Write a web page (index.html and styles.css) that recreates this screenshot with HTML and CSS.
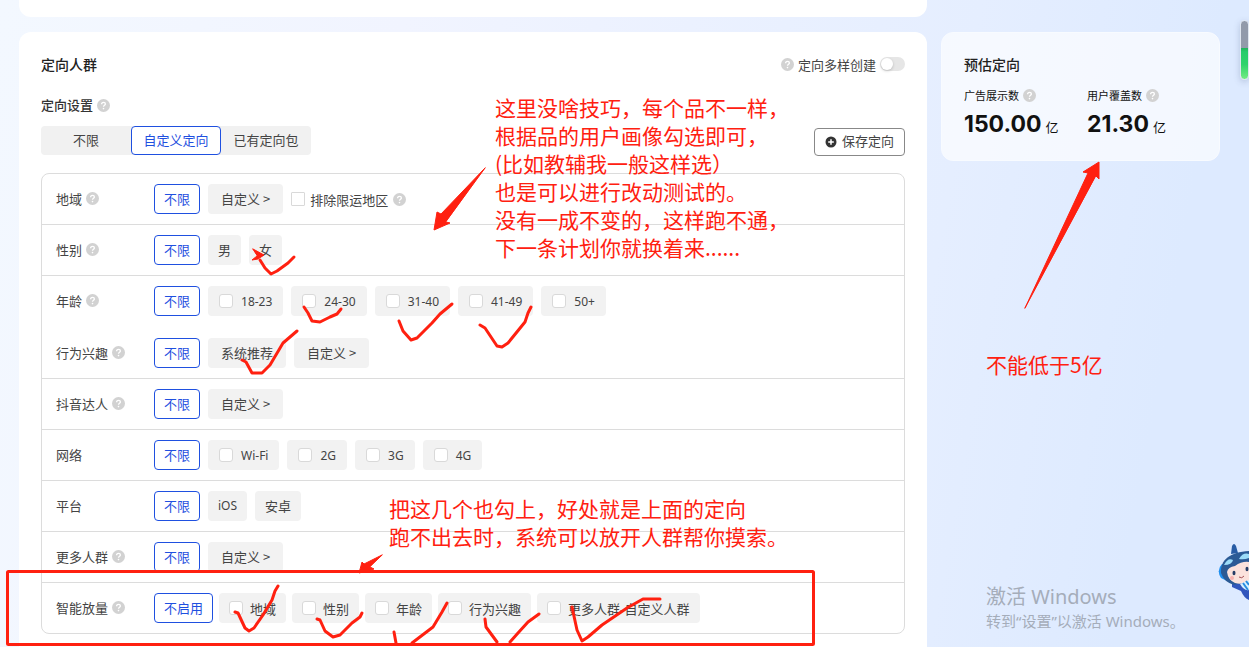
FILE: index.html
```html
<!DOCTYPE html>
<html lang="zh-CN">
<head>
  <meta charset="UTF-8" />
  <meta name="viewport" content="width=device-width, initial-scale=1" />
  <title>定向人群</title>
  <link rel="stylesheet" href="styles.css">
</head>

<body>

<svg class="defs" aria-hidden="true">
  <symbol id="help" viewBox="0 0 13 13">
    <circle cx="6.5" cy="6.5" r="6.5" fill="#d2d2d2" />
    <path d="M4.6 5.2c0-1.2.8-1.9 1.9-1.9s1.9.7 1.9 1.7c0 1.3-1.9 1.3-1.9 2.7" fill="none" stroke="#fff" stroke-width="1.3" />
    <circle cx="6.5" cy="9.6" r=".8" fill="#fff" />
  </symbol>
</svg>

<div class="page">
  <main class="main-column">
    <section class="card previous-card"></section>

    <section class="card audience-card">
      <div class="card-head">
        <h2>定向人群</h2>
        <label class="multi-create">
          <svg class="help"><use href="#help" /></svg>
          <span>定向多样创建</span>
          <input type="checkbox" class="switch" />
        </label>
      </div>

      <h3>定向设置 <svg class="help"><use href="#help" /></svg></h3>

      <div class="toolbar">
        <div class="segmented">
          <button type="button">不限</button>
          <button type="button" class="active">自定义定向</button>
          <button type="button">已有定向包</button>
        </div>
        <button type="button" class="save-btn">
          <svg viewBox="0 0 12 12" width="12" height="12"><circle cx="6" cy="6" r="5.5" fill="#333" /><path d="M6 3.2v5.6M3.2 6h5.6" stroke="#fff" stroke-width="1.5" /></svg>
          <span>保存定向</span>
        </button>
      </div>

      <div class="settings">
        <div class="row">
          <div class="line">
            <span class="name">地域 <svg class="help"><use href="#help" /></svg></span>
            <div class="chips">
              <button type="button" class="chip active">不限</button>
              <button type="button" class="chip">自定义 &gt;</button>
              <label class="plain-check"><input type="checkbox" />排除限运地区 <svg class="help"><use href="#help" /></svg></label>
            </div>
          </div>
        </div>

        <div class="row">
          <div class="line">
            <span class="name">性别 <svg class="help"><use href="#help" /></svg></span>
            <div class="chips">
              <button type="button" class="chip active">不限</button>
              <button type="button" class="chip short">男</button>
              <button type="button" class="chip short">女</button>
            </div>
          </div>
        </div>

        <div class="row double">
          <div class="line">
            <span class="name">年龄 <svg class="help"><use href="#help" /></svg></span>
            <div class="chips">
              <button type="button" class="chip active">不限</button>
              <label class="chip check latin"><input type="checkbox" />18-23</label>
              <label class="chip check latin"><input type="checkbox" />24-30</label>
              <label class="chip check latin"><input type="checkbox" />31-40</label>
              <label class="chip check latin"><input type="checkbox" />41-49</label>
              <label class="chip check latin"><input type="checkbox" />50+</label>
            </div>
          </div>
          <div class="line">
            <span class="name">行为兴趣 <svg class="help"><use href="#help" /></svg></span>
            <div class="chips">
              <button type="button" class="chip active">不限</button>
              <button type="button" class="chip">系统推荐</button>
              <button type="button" class="chip">自定义 &gt;</button>
            </div>
          </div>
        </div>

        <div class="row">
          <div class="line">
            <span class="name">抖音达人 <svg class="help"><use href="#help" /></svg></span>
            <div class="chips">
              <button type="button" class="chip active">不限</button>
              <button type="button" class="chip">自定义 &gt;</button>
            </div>
          </div>
        </div>

        <div class="row">
          <div class="line">
            <span class="name">网络</span>
            <div class="chips">
              <button type="button" class="chip active">不限</button>
              <label class="chip check latin"><input type="checkbox" />Wi-Fi</label>
              <label class="chip check latin"><input type="checkbox" />2G</label>
              <label class="chip check latin"><input type="checkbox" />3G</label>
              <label class="chip check latin"><input type="checkbox" />4G</label>
            </div>
          </div>
        </div>

        <div class="row">
          <div class="line">
            <span class="name">平台</span>
            <div class="chips">
              <button type="button" class="chip active">不限</button>
              <button type="button" class="chip short latin">iOS</button>
              <button type="button" class="chip short">安卓</button>
            </div>
          </div>
        </div>

        <div class="row">
          <div class="line">
            <span class="name">更多人群 <svg class="help"><use href="#help" /></svg></span>
            <div class="chips">
              <button type="button" class="chip active">不限</button>
              <button type="button" class="chip">自定义 &gt;</button>
            </div>
          </div>
        </div>

        <div class="row">
          <div class="line">
            <span class="name">智能放量 <svg class="help"><use href="#help" /></svg></span>
            <div class="chips tight">
              <button type="button" class="chip active">不启用</button>
              <label class="chip check"><input type="checkbox" />地域</label>
              <label class="chip check"><input type="checkbox" />性别</label>
              <label class="chip check"><input type="checkbox" />年龄</label>
              <label class="chip check"><input type="checkbox" />行为兴趣</label>
              <label class="chip check"><input type="checkbox" />更多人群-自定义人群</label>
            </div>
          </div>
        </div>
      </div>
    </section>
  </main>

  <aside class="estimate">
    <h2>预估定向</h2>
    <div class="stats">
      <div class="stat">
        <div class="stat-name">广告展示数 <svg class="help"><use href="#help" /></svg></div>
        <div class="stat-value"><strong>150.00</strong>亿</div>
      </div>
      <div class="stat">
        <div class="stat-name">用户覆盖数 <svg class="help"><use href="#help" /></svg></div>
        <div class="stat-value"><strong>21.30</strong>亿</div>
      </div>
    </div>
  </aside>
</div>

<div class="meter"></div>

<svg class="mascot" viewBox="0 0 31 58" width="31" height="58" aria-hidden="true">
  <path d="M13 11 14 3q2-4 4 0l2 7z" fill="#285ca5" />
  <path d="M4 21q-6 6-1 14l6 3V21z" fill="#1d8fef" />
  <path d="M14 39l17 2v16q-5-2-8-9l-9-4z" fill="#3156bd" />
  <path d="M3 30C2 17 12 9 31 8v30l-15 4Q6 39 3 30z" fill="#2b5a95" />
  <path d="M6 22q4-8 9-5-1 5-9 5zM21 16q4-7 10-5v4q-5 2-10 1z" fill="#9cdcf8" />
  <path d="M9 29q1-5 8-6 7-5 14-4v19q-7 4-14 2-7-3-8-11z" fill="#fbe2dc" />
  <circle cx="14" cy="35" r="2" fill="#f7b1ae" />
  <ellipse cx="16" cy="30" rx="1.5" ry="2.3" fill="#253d66" />
  <ellipse cx="29" cy="26" rx="1.5" ry="2.3" fill="#253d66" />
  <path d="M21 34q3 2 5-1" fill="none" stroke="#a55358" />
  <path d="M22 41l9-4v10q-5 1-9-6z" fill="#d8f2ff" />
  <path d="M25 40l5 7M28 38l3 4" stroke="#2a8de0" stroke-width="2" />
</svg>

<div class="watermark">
  <p class="watermark-title">激活 Windows</p>
  <p>转到“设置”以激活 Windows。</p>
</div>

<!-- hand-drawn review marks -->
<svg class="marks" viewBox="0 0 1249 647" width="1249" height="647" aria-hidden="true">
  <rect x="7.5" y="571.5" width="806" height="73" rx="1" />
  <path d="M260 260L265 268L271 274L277 271L288 263L294 257" />
  <path d="M304 307L308 313L312 321L320 322L330 317L337 314L341 309" />
  <path d="M399 321L403 331L411 340L417 338L432 323L440 314L452 304" />
  <path d="M480 325L485 328L497 346L502 347L508 343L525 322L528 313L531 307" />
  <path d="M242 360L246 362L252 373L262 373L270 365L283 343L297 331" />
  <path d="M235 612L238 613L245 628L249 631L254 628L263 615L272 600L275 591L278 586" />
  <path d="M317 619L320 620L325 631L333 637L340 635L352 623L360 617L362 613" />
  <path d="M394 632L396 643M412 643L433 627L442 612L447 603" />
  <path d="M485 619L486 627L497 642M510 642L518 633L528 622L539 614" />
  <path d="M572 607L577 630L582 641L588 637L602 625L627 608L643 599L660 599" />
  <g class="solid">
    <path d="M253 249L264 255L258 259L252 260L257 256z" />
    <path d="M485 168L441 214L437 212L434 230L450 223L446 222z" />
    <path d="M1025 308L1088 173L1083 172L1099 162L1099 179L1096 176z" />
    <path d="M382 555L364 564L362 562L359 573L374 569L370 567z" />
  </g>
</svg>
<p class="note note-pick">这里没啥技巧，每个品不一样，<br>根据品的用户画像勾选即可，<br>(比如教辅我一般这样选）<br>也是可以进行改动测试的。<br>没有一成不变的，这样跑不通，<br>下一条计划你就换着来......</p>
<p class="note note-expand">把这几个也勾上，好处就是上面的定向<br>跑不出去时，系统可以放开人群帮你摸索。</p>
<p class="note note-limit">不能低于5亿</p>

</body>
</html>
```

FILE: styles.css
```css
* {
  box-sizing: border-box;
}

body {
  margin: 0;
  font-family: "Noto Sans CJK SC", sans-serif;
  font-size: 13px;
  color: #444;
  background: linear-gradient(100deg, #f3f8ff 0%, #f1f4ff 30%, #e5eeff 72%, #ddeaff 90%);
  overflow: hidden;
}

h2, h3, p {
  margin: 0;
}

button, input {
  font: inherit;
  color: inherit;
  margin: 0;
}

button, label {
  cursor: pointer;
}

.defs {
  display: none;
}

.page {
  display: flex;
  gap: 14px;
  min-height: 100vh;
  padding: 0 29px 0 19px;
}

.main-column {
  flex: 1;
  display: flex;
  flex-direction: column;
  gap: 15px;
}

.card {
  background: #fff;
}

.previous-card {
  height: 17px;
  border-radius: 0 0 12px 12px;
}

.audience-card {
  flex: 1;
  padding: 21px 22px 12px;
  border-radius: 12px 12px 0 0;
}

h2 {
  font-size: 14px;
  line-height: 22px;
  font-weight: 500;
  color: #222;
}

h3 {
  display: flex;
  align-items: center;
  gap: 4px;
  margin-top: 20px;
  font-size: 13px;
  line-height: 20px;
  font-weight: 500;
  color: #333;
}

.help {
  width: 13px;
  height: 13px;
  flex: none;
}

.card-head, .toolbar {
  display: flex;
  align-items: center;
  justify-content: space-between;
}

.multi-create {
  display: flex;
  align-items: center;
  gap: 4px;
}

.switch {
  appearance: none;
  width: 25px;
  height: 14px;
  border-radius: 7px;
  background: #e6e6e6;
}

.switch::before {
  content: "";
  display: block;
  width: 12px;
  height: 12px;
  margin: 1px;
  border-radius: 50%;
  background: #fff;
  box-shadow: 0 1px 3px rgba(0, 0, 0, 0.2);
}

.toolbar {
  margin-top: 10px;
}

.segmented {
  display: flex;
  background: #f1f1f1;
  border-radius: 4px;
}

.segmented button {
  width: 90px;
  height: 29px;
  padding: 0 0 3px;
  border: 1px solid transparent;
  border-radius: 4px;
  background: none;
}

.segmented .active {
  background: #fff;
  border-color: #1f50e0;
  color: #1f50e0;
}

.save-btn {
  display: flex;
  align-items: center;
  justify-content: center;
  gap: 5px;
  width: 91px;
  height: 28px;
  padding: 0;
  margin-top: 3px;
  border: 1px solid #888;
  border-radius: 4px;
  background: #fff;
}

.save-btn span {
  padding-bottom: 3px;
}

.settings {
  margin-top: 17px;
  border: 1px solid #dcdcdc;
  border-radius: 8px;
}

.row {
  padding: 10px 14px;
  border-bottom: 1px solid #dcdcdc;
}

.row:last-child {
  border-bottom: none;
}

.double {
  display: grid;
  gap: 22px;
}

.line {
  display: flex;
  align-items: center;
}

.name {
  display: flex;
  align-items: center;
  gap: 4px;
  width: 98px;
  padding-bottom: 1px;
}

.chips {
  display: flex;
  align-items: center;
  gap: 8px;
}

.tight {
  gap: 6px;
}

.chip {
  display: flex;
  align-items: center;
  height: 30px;
  padding: 0 12px 2px;
  border: 1px solid transparent;
  border-radius: 4px;
  background: #f2f2f2;
}

.chip.active {
  padding: 0 9px 2px;
  background: #fff;
  border-color: #1f50e0;
  color: #1f50e0;
}

.chip.short {
  padding: 0 9px 2px;
}

.chip.check {
  gap: 8px;
  padding: 0 10px;
}

.tight .chip.check {
  gap: 7px;
  padding: 0 9px;
}

.latin {
  font-family: "Noto Sans", sans-serif;
  font-size: 12px;
}

.plain-check {
  display: flex;
  align-items: center;
  gap: 5px;
}

.check input, .plain-check input {
  appearance: none;
  width: 14px;
  height: 14px;
  border: 1px solid #d9d9d9;
  border-radius: 3px;
  background: #fff;
}

.plain-check input {
  border-radius: 1px;
}

/* right side */
.estimate {
  width: 279px;
  height: 129px;
  margin-top: 32px;
  padding: 20px 22px;
  border: 1px solid #f8fbff;
  border-radius: 12px;
  background: rgba(255, 255, 255, 0.65);
}

.stats {
  display: grid;
  grid-template-columns: 123px 1fr;
  margin-top: 12px;
  color: #111;
}

.stat-name {
  display: flex;
  align-items: center;
  gap: 4px;
  font-size: 11px;
  line-height: 16px;
}

.stat-value {
  display: flex;
  align-items: baseline;
  gap: 4px;
  margin-top: 6px;
  line-height: 30px;
}

.stat-value strong {
  font-family: Inter, sans-serif;
  font-size: 23px;
  font-weight: 700;
}

.meter {
  position: absolute;
  top: 20px;
  right: 0;
  width: 9px;
  height: 60px;
  border: 1px solid #dfe6f0;
  border-radius: 5px;
  background: linear-gradient(#929aaa 47%, #20b35c 47%, #27cc6b 53%, #30d36c 75%, #72ec83);
  box-shadow: 0 2px 6px rgba(60, 80, 120, 0.25);
}

.mascot {
  position: absolute;
  top: 543px;
  right: 0;
}

.watermark {
  position: absolute;
  top: 583px;
  left: 986px;
  font-family: "Noto Sans", "Noto Sans CJK SC", sans-serif;
  font-size: 15px;
  line-height: 20px;
  color: #a5adba;
}

.watermark-title {
  font-size: 20px;
  line-height: 28px;
}

/* annotations */
.marks {
  position: absolute;
  top: 0;
  left: 0;
  fill: none;
  stroke: #ff2010;
  stroke-width: 3;
  stroke-linecap: round;
  stroke-linejoin: round;
  pointer-events: none;
}

.solid {
  fill: #ff2010;
  stroke-width: 1;
}

.note {
  position: absolute;
  font-size: 21px;
  line-height: 28px;
  color: #ff2010;
  white-space: nowrap;
}

.note-pick {
  top: 93px;
  left: 495px;
}

.note-expand {
  top: 494px;
  left: 389px;
}

.note-limit {
  top: 350px;
  left: 986px;
}
```
